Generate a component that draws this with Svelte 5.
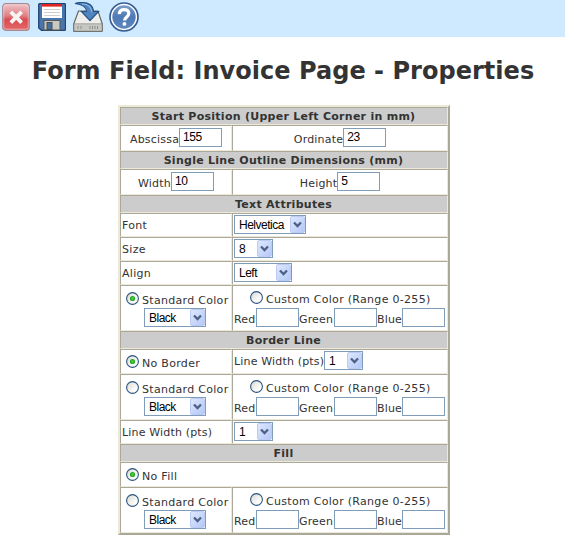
<script>
  const fieldRows = [
    { title: 'Start Position (Upper Left Corner in mm)', a: ['Abscissa', '155'], b: ['Ordinate', '23'] },
    { title: 'Single Line Outline Dimensions (mm)', a: ['Width', '10'], b: ['Height', '5'] }
  ];
  const textRows = [
    { label: 'Font', value: 'Helvetica', width: 72 },
    { label: 'Size', value: '8', width: 39 },
    { label: 'Align', value: 'Left', width: 58 }
  ];
  const channels = ['Red', 'Green', 'Blue'];
</script>

{#snippet dropdown(value, width)}
  <span class="select" style:width="{width}px">
    <select aria-label={value}><option>{value}</option></select>
    <svg class="arrow" width="15" height="17" viewBox="0 0 15 17">
      <rect x="0.5" y="0.5" width="14" height="16" rx="1.5" fill="url(#btn)" stroke="#bccbf6" />
      <path d="M4 6.5l3.5 3.5 3.5-3.5" fill="none" stroke="#4d6185" stroke-width="2.3" />
    </svg>
  </span>
{/snippet}

{#snippet radio(on)}
  <svg class="radio" width="13" height="13" viewBox="0 0 13 13">
    <circle cx="6.5" cy="6.5" r="5.9" fill="url(#rad)" stroke="#2b5480" stroke-width="1.1" />
    {#if on}<circle cx="6.5" cy="6.5" r="2.6" fill="url(#dot)" />{/if}
  </svg>
{/snippet}

{#snippet colorRow(on)}
  <div class="cell color">
    <div class="choice">{@render radio(on)}<span class="std">Standard Color</span></div>
    <div class="pick">{@render dropdown('Black', 62)}</div>
  </div>
  <div class="cell color">
    <div class="choice custom">{@render radio(false)}<span class="cst">Custom Color (Range 0-255)</span></div>
    <div class="rgb">
      {#each channels as c}<span class={c.toLowerCase()}>{c}</span><input aria-label={c} />{/each}
    </div>
  </div>
{/snippet}

<header>
  <svg width="28" height="28" viewBox="0 0 28 28" class="close">
    <rect x="0.7" y="0.7" width="26.6" height="26.6" rx="3" fill="url(#red)" stroke="#a98a92" stroke-width="1.2" />
    <rect x="1.8" y="1.8" width="24.4" height="24.4" rx="2" fill="none" stroke="#fff" stroke-opacity=".4" />
    <path d="M8.8 8.8l10.8 10.8M19.6 8.8l-10.8 10.8" stroke="#f8f4f4" stroke-width="3.8" />
  </svg>
  <svg width="28" height="28" viewBox="0 0 28 28" class="disk">
    <path d="M1.5.7h25q1 0 1 1v24.6q0 1-1 1h-23L.7 25V1.7q0-1 .8-1z" fill="#4776ad" stroke="#23446f" stroke-width="1.3" />
    <rect x="4" y="1" width="20" height="14" fill="#fff" />
    <rect x="4" y="1" width="20" height="2.6" fill="#e32222" />
    <path d="M6 6.5h16M6 9.5h16M6 12.5h16" stroke="#cfcfcf" stroke-width="1" />
    <rect x="6" y="17.5" width="16" height="9.5" fill="#c9c9c3" stroke="#55595c" />
    <rect x="9" y="19.5" width="5" height="7" fill="#456f9d" stroke="#4b4f50" />
  </svg>
  <svg width="30" height="30" viewBox="0 0 30 30" class="drive">
    <path d="M5.5 9h19.5l4.3 13v6.5q0 1-1 1H1.7q-1 0-1-1V22z" fill="#eeeeec" stroke="#62645f" stroke-width="1.2" />
    <path d="M1 21.8h28v6.5q0 .8-.8.8H1.8q-.8 0-.8-.8z" fill="#c6c8c3" stroke="#8b8e89" stroke-width=".7" />
    <path d="M5 24v3M8 24v3M17 24v3M19.5 24v3M22 24v3M24.5 24v3" stroke="#8d8f8a" />
    <path d="M2 1.5C11-1 20 1 20.5 9.5h5L17 18.7 8.5 9.5h5C13.5 5 10 2.5 2 1.5z" fill="#4f84bc" stroke="#24518a" stroke-width="1.2" />
    <path d="M9 1.8c6 .2 9.4 2.3 9.8 8.5" fill="none" stroke="#8fb5dc" stroke-width="1.3" />
  </svg>
  <svg width="30" height="30" viewBox="0 0 30 30" class="help">
    <circle cx="15" cy="15" r="14" fill="#fff" stroke="#375c94" stroke-width="1.7" />
    <circle cx="15" cy="15" r="11.7" fill="url(#blue)" />
    <path d="M10.5 12.1C10.2 9 12.3 7.6 15 7.6c2.8 0 4.8 1.5 4.8 4 0 3.2-4.2 3.5-4.2 6.8" fill="none" stroke="#fff" stroke-width="3.2" />
    <circle cx="15.4" cy="21.9" r="1.9" fill="#fff" />
  </svg>
</header>

<svg class="defs" width="0" height="0">
  <defs>
    <linearGradient id="btn" x1="0" y1="0" x2="1" y2="1"><stop stop-color="#dfe8ff" /><stop offset="1" stop-color="#b3c8f6" /></linearGradient>
    <linearGradient id="rad" x1="0" y1="0" x2="1" y2="1"><stop stop-color="#d8d8d0" /><stop offset=".75" stop-color="#fff" /></linearGradient>
    <radialGradient id="dot"><stop stop-color="#4fd44b" /><stop offset="1" stop-color="#22a121" /></radialGradient>
    <linearGradient id="red" x1="0" y1="0" x2="0" y2="1"><stop stop-color="#efc4c9" /><stop offset=".45" stop-color="#e08086" /><stop offset=".6" stop-color="#d94b50" /><stop offset="1" stop-color="#e46a6c" /></linearGradient>
    <linearGradient id="blue" x1="0" y1="0" x2="0" y2="1"><stop stop-color="#7c9dcb" /><stop offset=".5" stop-color="#4e79b4" /><stop offset="1" stop-color="#5f88c0" /></linearGradient>
  </defs>
</svg>

<main>
  <h1>Form Field: Invoice Page - Properties</h1>
  <div class="table">
    {#each fieldRows as r}
      <div class="cell head">{r.title}</div>
      <div class="cell field"><span>{r.a[0]}</span><input aria-label={r.a[0]} value={r.a[1]} /></div>
      <div class="cell field"><span>{r.b[0]}</span><input aria-label={r.b[0]} value={r.b[1]} /></div>
    {/each}
    <div class="cell head">Text Attributes</div>
    {#each textRows as r}
      <div class="cell label">{r.label}</div>
      <div class="cell control">{@render dropdown(r.value, r.width)}</div>
    {/each}
    {@render colorRow(true)}
    <div class="cell head">Border Line</div>
    <div class="cell single">{@render radio(true)}<span>No Border</span></div>
    <div class="cell control"><span class="pts">Line Width (pts)</span>{@render dropdown('1', 39)}</div>
    {@render colorRow(false)}
    <div class="cell label pts-label">Line Width (pts)</div>
    <div class="cell control">{@render dropdown('1', 39)}</div>
    <div class="cell head">Fill</div>
    <div class="cell single wide">{@render radio(true)}<span>No Fill</span></div>
    {@render colorRow(false)}
  </div>
</main>

<style>
  :global(body) { background: #fff; overflow: hidden; }
  header { display: flex; height: 37px; box-sizing: border-box; padding: 2px 0 0 2px; background: #cfeaff; }
  .disk { margin-left: 8px; }
  .close, .disk { margin-top: 1px; }
  .drive { margin-left: 7px; }
  .help { margin-left: 6px; }
  svg { display: block; flex: none; }
  .defs { position: absolute; }
  main { display: flex; flex-direction: column; color: #333; font: 11px/14px Verdana, "DejaVu Sans", sans-serif; }
  h1 { margin: 16px 0 0 1px; height: 52px; font-size: 24px; line-height: 36px; text-align: center; white-space: nowrap; letter-spacing: .03px; }
  .table {
    display: grid; grid-template-columns: 112px 216px;
    grid-template-rows: 18px 26px 18px 26px 18px 24px 24px 24px 46px 18px 25px 46px 24px 18px 25px 46px;
    width: 328px; margin-left: 118px; letter-spacing: .3px;
    border: 2px solid; border-color: #ece9d8 #aca899 #aca899 #ece9d8;
  }
  .cell { display: flex; box-sizing: border-box; min-width: 0; border: 1px solid; border-color: #aca899 #ece9d8 #ece9d8 #aca899; white-space: nowrap; }
  .head { grid-column: 1 / -1; justify-content: center; padding: 2px 1px 0 0; background: #ccc; font-weight: bold; letter-spacing: .27px; }
  .field { justify-content: center; padding-top: 2px; letter-spacing: .2px; }
  .field span { padding-top: 5px; }
  input { box-sizing: border-box; width: 43px; height: 19px; margin: 0; padding: 0 3px 2px; border: 1px solid #7f9db9; border-radius: 0; background: #fff; color: #000; font: 12px "Liberation Sans", sans-serif; letter-spacing: -.5px; outline: 0; }
  .label { padding: 5px 0 0 1px; }
  .pts-label { letter-spacing: .17px; }
  .control { padding: 1px 0 0 1px; }
  .pts { width: 90px; padding-top: 4px; letter-spacing: .17px; }
  .select { display: block; position: relative; height: 19px; flex: none; }
  select { appearance: none; display: block; box-sizing: border-box; width: 100%; height: 19px; margin: 0; padding: 0 0 0 4px; border: 1px solid #7f9db9; border-radius: 0; background: #fff; color: #000; font: 12px "Liberation Sans", sans-serif; letter-spacing: -.5px; }
  .arrow { position: absolute; top: 1px; right: 1px; }
  .color { flex-direction: column; }
  .choice { display: flex; height: 22px; padding: 6px 0 0 5px; box-sizing: border-box; gap: 3px; }
  .choice span { padding-top: 2px; }
  .choice.custom { padding: 5px 0 0 17px; }
  .pick { padding-left: 23px; }
  .rgb { display: flex; padding-left: 1px; letter-spacing: .15px; }
  .rgb span { padding-top: 5px; }
  .red { width: 22px; }
  .green { width: 35px; }
  .blue { width: 25px; }
  .single { padding: 5px 0 0 5px; gap: 3px; }
  .single span { padding-top: 2px; }
  .wide { grid-column: 1 / -1; }
</style>
